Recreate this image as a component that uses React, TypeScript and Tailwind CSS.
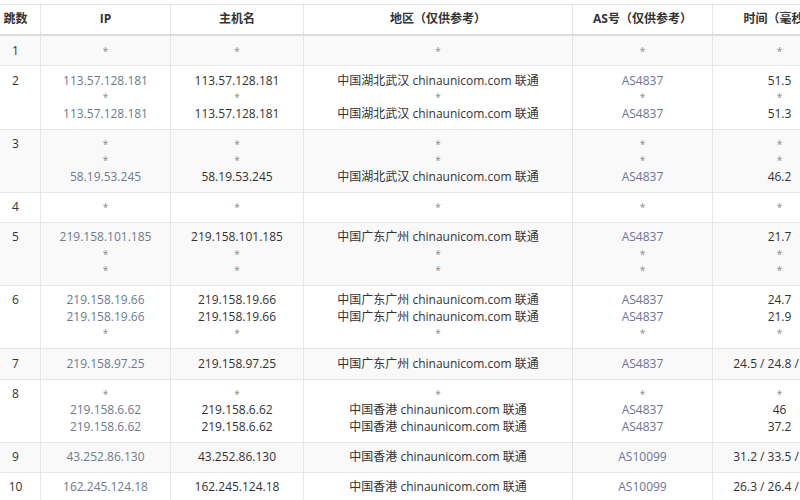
import React from "react";

type Row = { n: string; ip: string[]; host: string[]; region: string[]; as: string[]; time: string[] };

const WH = "中国湖北武汉 chinaunicom.com 联通";
const GZ = "中国广东广州 chinaunicom.com 联通";
const HK = "中国香港 chinaunicom.com 联通";

const rows: Row[] = [
  { n: "1", ip: ["*"], host: ["*"], region: ["*"], as: ["*"], time: ["*"] },
  {
    n: "2",
    ip: ["113.57.128.181", "*", "113.57.128.181"],
    host: ["113.57.128.181", "*", "113.57.128.181"],
    region: [WH, "*", WH],
    as: ["AS4837", "*", "AS4837"],
    time: ["51.5", "*", "51.3"],
  },
  {
    n: "3",
    ip: ["*", "*", "58.19.53.245"],
    host: ["*", "*", "58.19.53.245"],
    region: ["*", "*", WH],
    as: ["*", "*", "AS4837"],
    time: ["*", "*", "46.2"],
  },
  { n: "4", ip: ["*"], host: ["*"], region: ["*"], as: ["*"], time: ["*"] },
  {
    n: "5",
    ip: ["219.158.101.185", "*", "*"],
    host: ["219.158.101.185", "*", "*"],
    region: [GZ, "*", "*"],
    as: ["AS4837", "*", "*"],
    time: ["21.7", "*", "*"],
  },
  {
    n: "6",
    ip: ["219.158.19.66", "219.158.19.66", "*"],
    host: ["219.158.19.66", "219.158.19.66", "*"],
    region: [GZ, GZ, "*"],
    as: ["AS4837", "AS4837", "*"],
    time: ["24.7", "21.9", "*"],
  },
  {
    n: "7",
    ip: ["219.158.97.25"],
    host: ["219.158.97.25"],
    region: [GZ],
    as: ["AS4837"],
    time: ["24.5 / 24.8 / 24.6"],
  },
  {
    n: "8",
    ip: ["*", "219.158.6.62", "219.158.6.62"],
    host: ["*", "219.158.6.62", "219.158.6.62"],
    region: ["*", HK, HK],
    as: ["*", "AS4837", "AS4837"],
    time: ["*", "46", "37.2"],
  },
  {
    n: "9",
    ip: ["43.252.86.130"],
    host: ["43.252.86.130"],
    region: [HK],
    as: ["AS10099"],
    time: ["31.2 / 33.5 / 32.1"],
  },
  {
    n: "10",
    ip: ["162.245.124.18"],
    host: ["162.245.124.18"],
    region: [HK],
    as: ["AS10099"],
    time: ["26.3 / 26.4 / 26.2"],
  },
];

function Lines({ items, color }: { items: string[]; color: string }) {
  return (
    <>
      {items.map((t, i) =>
        t === "*" ? (
          <div key={i} className="text-[#8a8a8a] text-[10px] leading-[16.5px]">
            *
          </div>
        ) : (
          <div key={i} className={color}>
            {t}
          </div>
        )
      )}
    </>
  );
}

const cell = "border border-[#e6e6e6] px-1 py-[6.35px] align-top text-center";

export default function App() {
  return (
    <div
      className="w-[800px] h-[500px] overflow-hidden bg-white pt-[4px]"
      style={{ fontFamily: '"Open Sans", "Noto Sans CJK SC", sans-serif' }}
    >
      <table className="ml-[-10px] w-[856px] table-fixed border-collapse text-[12px] leading-[16.5px] text-[#333]">
        <colgroup>
          <col className="w-[50px]" />
          <col className="w-[130px]" />
          <col className="w-[133px]" />
          <col className="w-[269px]" />
          <col className="w-[140px]" />
          <col className="w-[134px]" />
        </colgroup>
        <thead>
          <tr className="bg-white">
            {["跳数", "IP", "主机名", "地区（仅供参考）", "AS号（仅供参考）", "时间（毫秒）"].map((h) => (
              <th key={h} className={`${cell} font-bold text-[#333] border-b-[2px] border-b-[#dcdcdc]`}>
                {h}
              </th>
            ))}
          </tr>
        </thead>
        <tbody>
          {rows.map((r, i) => (
            <tr key={r.n} className={i % 2 === 0 ? "bg-[#f9f9f9]" : "bg-white"}>
              <td className={cell}>{r.n}</td>
              <td className={cell}>
                <Lines items={r.ip} color="text-[#6e7b8e]" />
              </td>
              <td className={cell}>
                <Lines items={r.host} color="text-[#333]" />
              </td>
              <td className={cell}>
                <Lines items={r.region} color="text-[#333]" />
              </td>
              <td className={cell}>
                <Lines items={r.as} color="text-[#6c7598]" />
              </td>
              <td className={`${cell} whitespace-nowrap`}>
                <Lines items={r.time} color="text-[#333]" />
              </td>
            </tr>
          ))}
        </tbody>
      </table>
    </div>
  );
}
